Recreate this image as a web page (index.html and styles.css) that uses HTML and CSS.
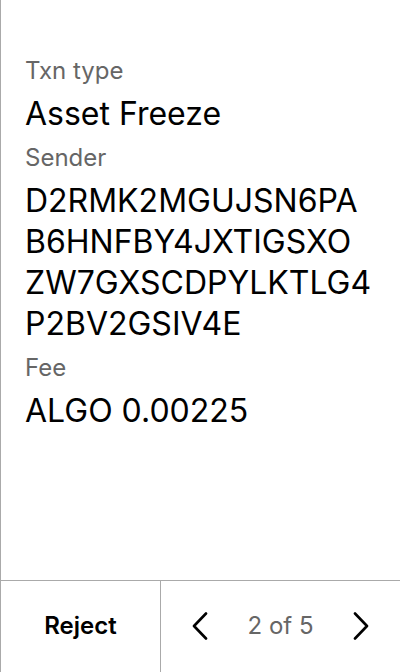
FILE: index.html
```html
<!DOCTYPE html>
<html>
<head>
<meta charset="utf-8">
<link rel="stylesheet" href="styles.css">
</head>
<body>
<div class="screen">
  <main class="details">
    <div class="field">
      <div class="label">Txn type</div>
      <div class="value">Asset Freeze</div>
    </div>
    <div class="field">
      <div class="label">Sender</div>
      <div class="value">D2RMK2MGUJSN6PA<br>B6HNFBY4JXTIGSXO<br>ZW7GXSCDPYLKTLG4<br>P2BV2GSIV4E</div>
    </div>
    <div class="field">
      <div class="label">Fee</div>
      <div class="value">ALGO 0.00225</div>
    </div>
  </main>
  <footer class="bar">
    <button class="reject">Reject</button>
    <nav class="pager">
      <svg class="chev" width="16" height="28" viewBox="0 0 16 28"><path d="M14 1.5 L2 14 L14 26.5" fill="none" stroke="#000" stroke-width="2.6" stroke-linecap="round" stroke-linejoin="round"/></svg>
      <span class="count">2 of 5</span>
      <svg class="chev" width="16" height="28" viewBox="0 0 16 28"><path d="M2 1.5 L14 14 L2 26.5" fill="none" stroke="#000" stroke-width="2.6" stroke-linecap="round" stroke-linejoin="round"/></svg>
    </nav>
  </footer>
</div>
</body>
</html>
```
FILE: styles.css
```css
html, body {
  margin: 0;
  padding: 0;
  background: #fff;
}
body {
  font-family: Inter, "Noto Sans", sans-serif;
  color: #000;
}
.screen {
  width: 400px;
  height: 672px;
  box-sizing: border-box;
  border-left: 1px solid #aaa;
  display: flex;
  flex-direction: column;
}
.details {
  flex: 1;
  padding: 55px 24px 0 24px;
  display: flex;
  flex-direction: column;
  gap: 8px;
}
.field {
  display: flex;
  flex-direction: column;
  gap: 6px;
}
.label {
  font-size: 24px;
  line-height: 32px;
  color: #666;
}
.value {
  font-size: 32px;
  line-height: 41px;
  color: #000;
  white-space: nowrap;
}
.bar {
  height: 92px;
  border-top: 1px solid #aaa;
  display: flex;
  box-sizing: border-box;
}
.reject {
  width: 160px;
  border: none;
  border-right: 1px solid #aaa;
  background: none;
  font-family: Inter, "Noto Sans", sans-serif;
  font-size: 24px;
  font-weight: 600;
  color: #000;
  padding: 0 0 2px 0;
}
.pager {
  flex: 1;
  display: flex;
  align-items: center;
  justify-content: space-between;
  padding: 0 31px 2px 31px;
}
.count {
  font-size: 24px;
  color: #666;
}
```
